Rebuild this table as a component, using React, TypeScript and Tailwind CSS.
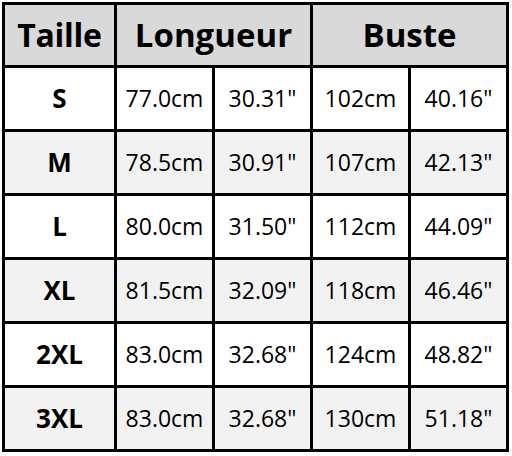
const rows = [
  { size: "S", len: ["77.0cm", '30.31"'], bust: ["102cm", '40.16"'] },
  { size: "M", len: ["78.5cm", '30.91"'], bust: ["107cm", '42.13"'] },
  { size: "L", len: ["80.0cm", '31.50"'], bust: ["112cm", '44.09"'] },
  { size: "XL", len: ["81.5cm", '32.09"'], bust: ["118cm", '46.46"'] },
  { size: "2XL", len: ["83.0cm", '32.68"'], bust: ["124cm", '48.82"'] },
  { size: "3XL", len: ["83.0cm", '32.68"'], bust: ["130cm", '51.18"'] },
];

export default function App() {
  return (
    <div className="w-[512px] h-[456px] bg-white p-[2px] font-['Open_Sans',sans-serif] text-black">
      <div className="grid grid-cols-[109px_95px_95px_95px_95px] grid-rows-[60px_repeat(6,61px)] gap-[3px] bg-black p-[3px] w-fit">
        {/* header */}
        <div className="bg-[#d9d9d9] flex items-center justify-center text-[32px] font-bold tracking-[-0.3px]">
          Taille
        </div>
        <div className="col-span-2 bg-[#d9d9d9] flex items-center justify-center text-[33px] font-bold">
          Longueur
        </div>
        <div className="col-span-2 bg-[#d9d9d9] flex items-center justify-center text-[33px] font-bold">
          Buste
        </div>

        {rows.map((r, i) => {
          const bg = i % 2 === 0 ? "bg-white" : "bg-[#f2f2f2]";
          return [
            <div
              key={r.size + "s"}
              className={`${bg} flex items-center justify-center text-[26px] font-bold`}
            >
              {r.size}
            </div>,
            ...[...r.len, ...r.bust].map((v, j) => (
              <div
                key={r.size + j}
                className={`${bg} flex items-center justify-center text-[23px]`}
              >
                {v}
              </div>
            )),
          ];
        })}
      </div>
    </div>
  );
}
